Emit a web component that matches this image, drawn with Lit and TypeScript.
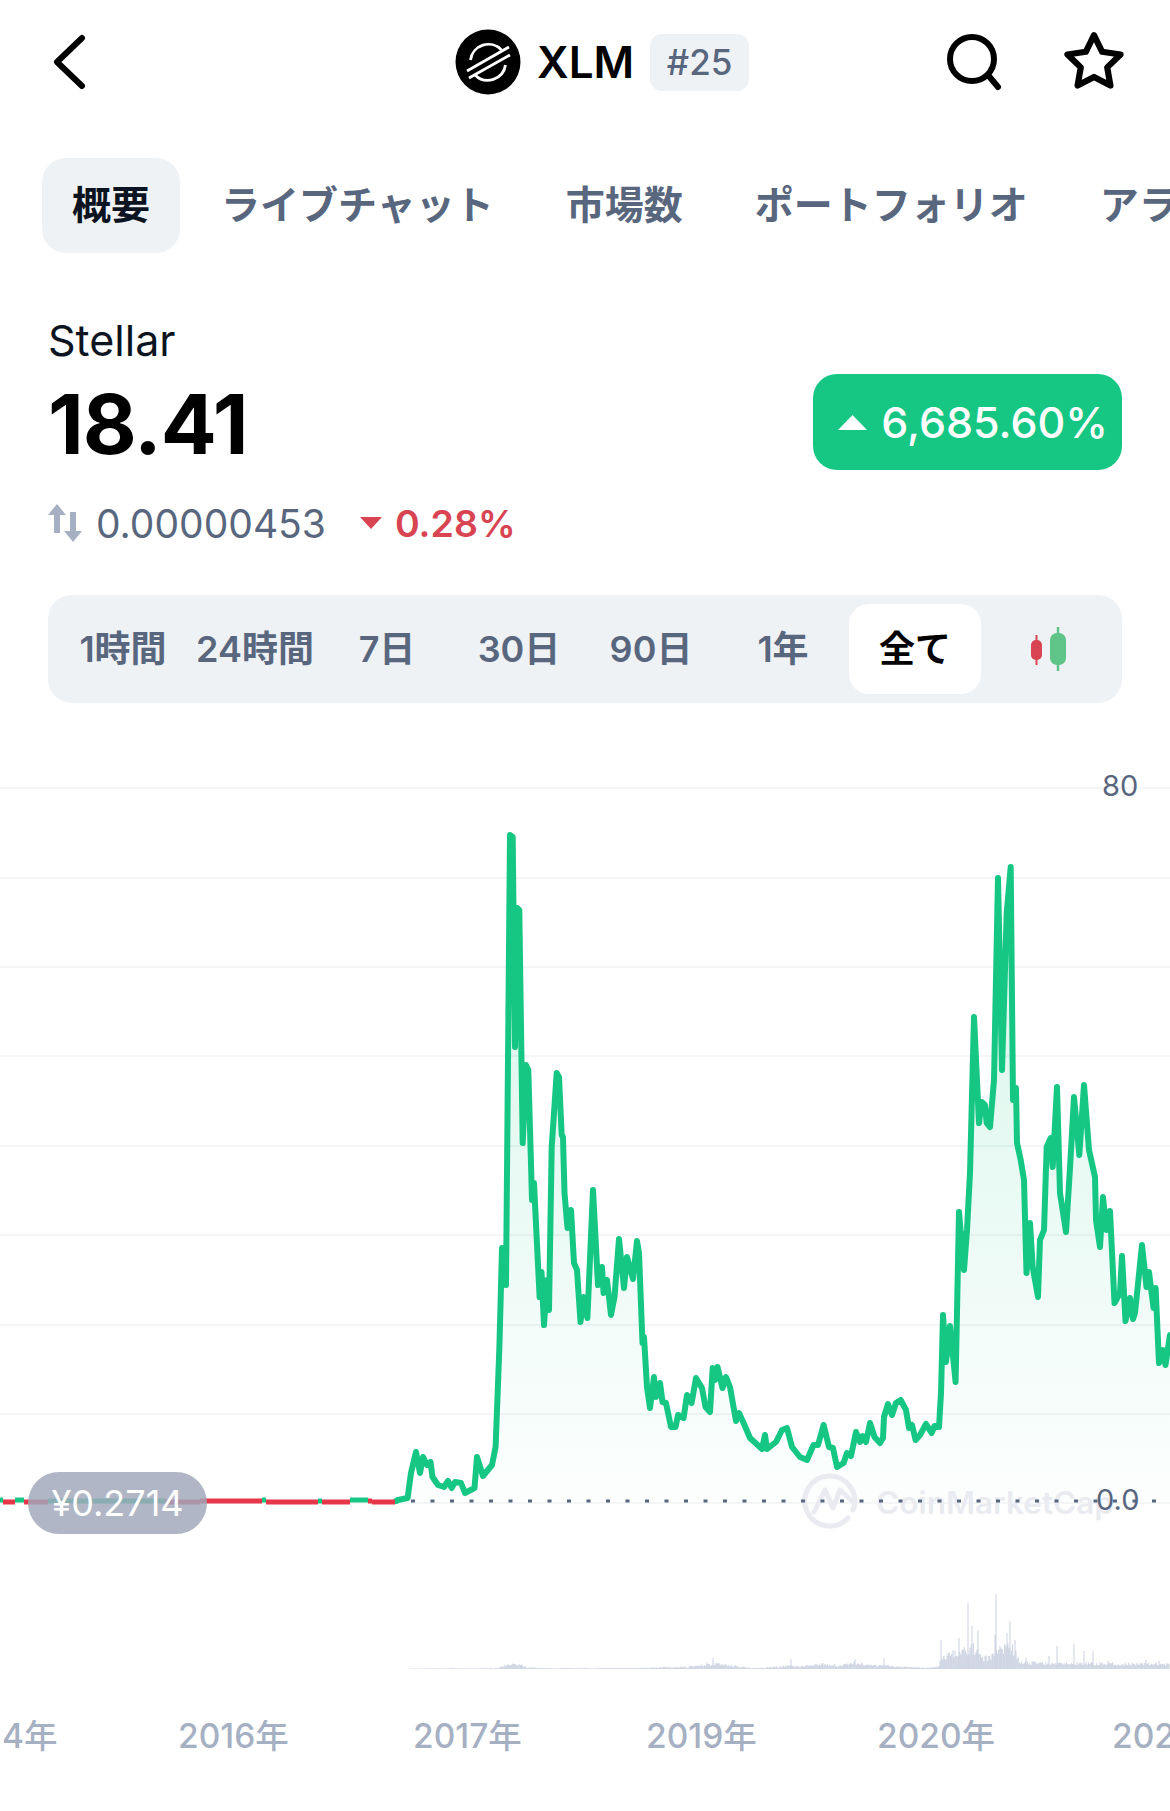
import { css, html, LitElement, svg } from "lit";
import { customElement } from "lit/decorators.js";

// chart geometry is in page pixels, the svg viewBox starts where the chart does
const CHART_TOP = 703;
const CHART_HEIGHT = 1108;
const ZERO_Y = 1501;
const VOLUME_Y = 1669;

const GRID_LINES = [788, 878, 967, 1056, 1146, 1235, 1325, 1414, 1503];

const PRICE: [number, number][] = [
  [396, 1501], [398, 1500], [407.6, 1498], [411, 1473], [416, 1452], [420, 1473], [423, 1457], [427, 1465],
  [430.5, 1462], [432.5, 1477], [438, 1485], [444, 1487], [448, 1481], [451.6, 1488], [455, 1482], [461, 1483],
  [465, 1493], [474.5, 1488], [477, 1457], [483, 1476], [492, 1465], [495.6, 1447], [499.4, 1347], [502, 1248],
  [506, 1285], [510, 835], [512.7, 837], [515, 1047], [517.3, 908], [519.3, 910], [522.7, 1143], [526, 1065],
  [528.3, 1070], [530.7, 1153], [532, 1200], [534, 1183], [539.6, 1297], [541.5, 1272], [544, 1325], [547, 1280],
  [549, 1310], [551.7, 1147], [556.7, 1073], [559, 1077], [561.7, 1135], [563, 1137], [564.5, 1193], [567.5, 1228],
  [571, 1210], [574, 1263], [577, 1270], [580.5, 1322], [583.6, 1297], [587.4, 1318], [593, 1190], [598, 1285],
  [602, 1267], [603.6, 1293], [607, 1280], [611, 1315], [614.5, 1297], [619, 1239], [624, 1288], [627, 1257],
  [633, 1279], [637, 1241], [639, 1253], [642.5, 1343], [644, 1337], [647, 1387], [650, 1408], [654, 1377],
  [656, 1397], [660, 1383], [662.5, 1402], [666, 1403], [671, 1427], [675.6, 1427], [678, 1415], [683.6, 1418],
  [687, 1395], [691.6, 1403], [696, 1378], [702, 1388], [705.5, 1407], [710, 1412], [712.7, 1368], [715, 1380],
  [717.5, 1367], [722.5, 1388], [726, 1377], [730, 1387], [736, 1421], [739, 1413], [743.6, 1423], [750, 1438],
  [762, 1449], [765, 1435], [767, 1449], [776, 1442], [782, 1430], [787, 1428], [792, 1447], [800, 1457],
  [807, 1460], [813.5, 1445], [818, 1445], [823.6, 1425], [829, 1447], [833, 1448], [837, 1467], [843.6, 1463],
  [847, 1453], [851, 1456], [856, 1432], [860, 1442], [862.5, 1436], [866, 1442], [870, 1423], [874.5, 1437],
  [880, 1443], [883, 1438], [884, 1417], [888, 1404], [892, 1415], [896, 1403], [900.7, 1400], [906, 1410],
  [909, 1428], [912, 1425], [915.6, 1440], [920, 1435], [926, 1424], [931.6, 1433], [934.5, 1426], [939, 1427],
  [941, 1393], [943, 1315], [946, 1362], [950, 1326], [955.6, 1382], [959, 1212], [964, 1270], [967, 1230],
  [970, 1173], [974, 1017], [979, 1123], [981.7, 1102], [985, 1105], [986.7, 1123], [990, 1127], [994, 1080],
  [998, 878], [1002, 1070], [1006.7, 913], [1010.7, 867], [1013, 1100], [1016, 1088], [1017, 1143], [1020.7, 1160],
  [1024, 1180], [1026.5, 1273], [1030, 1223], [1032.7, 1267], [1038, 1297], [1040, 1240], [1044, 1230], [1046.7, 1147],
  [1050.7, 1138], [1052.7, 1167], [1057, 1087], [1060, 1193], [1066, 1232], [1070, 1168], [1074, 1097], [1079.3, 1155],
  [1084, 1085], [1089, 1150], [1095, 1177], [1096, 1220], [1100, 1247], [1103, 1197], [1106.5, 1230], [1110, 1211],
  [1114.5, 1303], [1120, 1293], [1122, 1256], [1125.5, 1321], [1130, 1298], [1133, 1319], [1135, 1313], [1142, 1245],
  [1146.5, 1287], [1149, 1272], [1153.5, 1308], [1155.6, 1288], [1159, 1363], [1163, 1350], [1165.5, 1365], [1170, 1335],
];

// flat start of the line, coloured per stretch: from, to, colour, small vertical wobble
const FLAT: [number, number, string, number][] = [
  [0, 3, "g", -1], [3, 15, "r", 1], [15, 24, "g", -1], [24, 48, "r", 1], [48, 165, "g", 0], [165, 200, "r", 1],
  [200, 262, "r", 0], [262, 266, "g", -1], [266, 318, "r", 1], [318, 322, "g", 0], [322, 350, "r", 1],
  [350, 368, "g", -1], [368, 372, "r", 0], [372, 395, "r", 1], [395, 398, "g", 0],
];

const VOLUME_BASE: [number, number][] = [
  [410, 0.6], [495, 1], [500, 2], [509, 7], [520, 6], [527, 2], [550, 1], [640, 1.2], [690, 3], [713, 7], [728, 5],
  [739, 3], [755, 1], [780, 3], [791, 5], [800, 3], [825, 7], [840, 4], [855, 8], [870, 6], [900, 3], [925, 1.5],
  [938, 3], [942, 14], [960, 22], [975, 28], [985, 14], [1000, 22], [1012, 30], [1020, 10], [1030, 8], [1170, 6],
];

const VOLUME_SPIKES: [number, number][] = [
  [941, 29], [944, 13], [949, 13], [953, 19], [959, 31], [968, 66], [972, 43], [978, 38], [985, 13], [995, 34],
  [996, 75], [1000, 23], [1007, 36], [1010, 48], [1015, 29], [1026, 11], [1049, 13], [1057, 23], [1074, 25],
  [1084, 18], [1093, 18], [1108, 8], [1146, 9], [1159, 8], [713, 11], [791, 10], [855, 10], [884, 11],
];

const YEARS: [string, number][] = [
  ["4年", 2], ["2016年", 178], ["2017年", 413], ["2019年", 646], ["2020年", 877], ["2021年", 1112],
];

const TABS = ["概要", "ライブチャット", "市場数", "ポートフォリオ", "アラート"];
const RANGES = ["1時間", "24時間", "7日", "30日", "90日", "1年", "全て"];

function volumeAt(x: number) {
  for (let i = 1; i < VOLUME_BASE.length; i++) {
    const [x0, h0] = VOLUME_BASE[i - 1];
    const [x1, h1] = VOLUME_BASE[i];
    if (x <= x1) return h0 + ((h1 - h0) * (x - x0)) / (x1 - x0);
  }
  return 0;
}

function volumePath() {
  let seed = 17;
  let d = "";
  for (let x = 410; x < 1170; x += 1.15) {
    seed = (seed * 16807) % 2147483647;
    const h = volumeAt(x) * (0.5 + (seed % 100) / 200);
    d += `M${x.toFixed(1)} ${VOLUME_Y}v${(-h).toFixed(1)}`;
  }
  for (const [x, h] of VOLUME_SPIKES) d += `M${x} ${VOLUME_Y}v${-h}`;
  return d;
}

@customElement("app-root")
export class AppRoot extends LitElement {
  static styles = css`
    :host {
      display: block;
      width: 1170px;
      height: 1811px;
      overflow: hidden;
      background: #fff;
      font-family: Inter, "Noto Sans CJK JP", sans-serif;
      color: #0d1421;
    }

    .header {
      display: flex;
      align-items: center;
      height: 124px;
      padding-left: 51px;
    }

    .back {
      width: 36px;
      height: 56px;
    }

    .title {
      display: flex;
      align-items: center;
      margin-left: 368px;
    }

    .logo {
      width: 66px;
      height: 66px;
    }

    .symbol {
      margin-left: 16px;
      font-size: 44px;
      font-weight: 600;
      color: #000;
    }

    .rank {
      margin-left: 16px;
      width: 99px;
      height: 57px;
      line-height: 57px;
      text-align: center;
      border-radius: 12px;
      background: #eff2f5;
      color: #58667e;
      font-size: 35px;
      font-weight: 500;
    }

    .search {
      width: 58px;
      height: 58px;
      margin-left: 196px;
    }

    .star {
      width: 62px;
      height: 64px;
      margin-left: 60px;
    }

    .tabs {
      display: flex;
      align-items: center;
      height: 95px;
      margin-top: 34px;
      padding-left: 42px;
      white-space: nowrap;
    }

    .tab {
      flex-shrink: 0;
      padding: 0 36px;
      line-height: 93px;
      height: 95px;
      font-size: 39px;
      font-weight: 600;
      color: #58667e;
    }

    .tab.active {
      padding: 0 30px;
      margin-right: 5px;
      border-radius: 24px;
      background: #eff2f5;
      color: #0d1421;
      font-weight: 700;
    }

    .info {
      padding: 0 48px;
    }

    .name {
      margin-top: 63px;
      line-height: 48px;
      font-size: 43px;
      color: #0d1421;
    }

    .price-row {
      display: flex;
      align-items: center;
      justify-content: space-between;
      height: 96px;
      margin-top: 10px;
    }

    .price {
      padding-top: 3px;
      font-size: 83px;
      font-weight: 700;
      color: #000;
      letter-spacing: -1px;
    }

    .change {
      display: flex;
      align-items: center;
      gap: 14px;
      height: 96px;
      padding: 0 14px 0 25px;
      border-radius: 24px;
      background: #16c784;
      color: #fff;
      font-size: 43px;
      font-weight: 500;
    }

    .tri-up {
      width: 29px;
      height: 15px;
    }

    .sub-row {
      display: flex;
      align-items: center;
      height: 50px;
      margin-top: 28px;
      color: #58667e;
      font-size: 39px;
    }

    .swap {
      width: 34px;
      height: 38px;
      margin-right: 14px;
    }

    .tri-down {
      width: 22px;
      height: 12px;
      margin-left: 34px;
      margin-right: 13px;
    }

    .pct {
      color: #d94452;
      font-size: 37.500px;
      font-weight: 600;
    }

    .ranges {
      display: grid;
      grid-template-columns: repeat(8, 132px);
      align-items: center;
      height: 108px;
      margin-top: 47px;
      padding: 0 9px;
      box-sizing: border-box;
      border-radius: 24px;
      background: #eff2f5;
    }

    .range {
      height: 90px;
      line-height: 90px;
      text-align: center;
      font-size: 36px;
      font-weight: 600;
      color: #58667e;
      white-space: nowrap;
    }

    .range.active {
      border-radius: 20px;
      background: #fff;
      color: #000;
      font-weight: 700;
    }

    .candles {
      justify-self: center;
      width: 36px;
      height: 44px;
      margin-left: 4px;
    }

    .chart {
      position: relative;
      height: ${CHART_HEIGHT}px;
    }

    .chart svg {
      display: block;
    }

    .spot {
      position: absolute;
      left: 28px;
      top: ${1472 - CHART_TOP}px;
      width: 179px;
      height: 62px;
      line-height: 62px;
      border-radius: 31px;
      text-align: center;
      background: rgba(161, 168, 186, 0.84);
      color: #fff;
      font-size: 36px;
    }

    .axis {
      fill: #58667e;
      font-size: 29px;
    }

    .year {
      fill: #a6b0c3;
      font-size: 33.5px;
      font-weight: 500;
    }

    .mark {
      fill: #e9ebf1;
      font-size: 31.500px;
      font-weight: 600;
    }
  `;

  private renderChart() {
    const line = PRICE.map(([x, y]) => `${x},${y}`).join(" ");
    return html`
      <svg width="1170" height=${CHART_HEIGHT} viewBox="0 ${CHART_TOP} 1170 ${CHART_HEIGHT}">
        <defs>
          <linearGradient id="area" gradientUnits="userSpaceOnUse" x1="0" y1="1050" x2="0" y2="1503">
            <stop offset="0" stop-color="#16c784" stop-opacity="0.13"></stop>
            <stop offset="1" stop-color="#16c784" stop-opacity="0.01"></stop>
          </linearGradient>
        </defs>
        ${GRID_LINES.map((y) => svg`<line x1="0" x2="1170" y1=${y} y2=${y} stroke="#eff2f5" stroke-width="1.5"></line>`)}
        <polygon points="396,${ZERO_Y} ${line} 1170,${ZERO_Y}" fill="url(#area)"></polygon>

        <g fill="none" stroke="#e9ebf1" stroke-width="5" stroke-linecap="round" stroke-linejoin="round">
          <path d="M853 1510A25 25 0 1 0 848 1518"></path>
          <path d="M814 1512L825 1490 833 1508 840 1490 852 1501"></path>
        </g>
        <text class="mark" x="876" y="1514">CoinMarketCap</text>

        <line x1="411" x2="1170" y1=${ZERO_Y} y2=${ZERO_Y} stroke="#58667e" stroke-width="3" stroke-dasharray="4 15.500"></line>

        <path d=${volumePath()} fill="none" stroke="#d0d6e4" stroke-width="1.100"></path>

        <polyline points=${line} fill="none" stroke="#16c784" stroke-width="6" stroke-linejoin="round" stroke-linecap="round"></polyline>
        ${FLAT.map(
          ([a, b, c, w]) => svg`<line x1=${a} x2=${b} y1=${ZERO_Y + w} y2=${ZERO_Y + w} stroke=${c === "r" ? "#e5364a" : "#16c784"} stroke-width="5"></line>`,
        )}

        <text class="axis" x="1102" y="796">80</text>
        <text class="axis" x="1096" y="1510">0.0</text>
        ${YEARS.map(([label, x]) => svg`<text class="year" x=${x} y="1748">${label}</text>`)}
      </svg>
      <div class="spot">¥0.2714</div>
    `;
  }

  render() {
    return html`
      <div class="header">
        <svg class="back" viewBox="0 0 36 56" fill="none" stroke="#000" stroke-width="6" stroke-linecap="round" stroke-linejoin="round">
          <path d="M31 4 6 28l25 24"></path>
        </svg>
        <div class="title">
          <svg class="logo" viewBox="0 0 66 66" fill="none">
            <circle cx="33" cy="33" r="32.500" fill="#000"></circle>
            <g stroke="#fff" stroke-width="2.800">
              <path d="M12 42 54 18M14 49 55 26"></path>
              <path d="M15.500 31A18 18 0 0 1 46.500 21"></path>
              <path d="M50.500 36A18 18 0 0 1 20 46"></path>
            </g>
          </svg>
          <span class="symbol">XLM</span>
          <span class="rank">#25</span>
        </div>
        <svg class="search" viewBox="0 0 58 58" fill="none" stroke="#000" stroke-width="6" stroke-linecap="round">
          <circle cx="27" cy="26" r="22"></circle>
          <path d="M43 42 53 54"></path>
        </svg>
        <svg class="star" viewBox="0 0 60 62" fill="none" stroke="#000" stroke-width="6" stroke-linejoin="round">
          <path d="M30 5 37.900 21.100 55.700 23.700 42.800 36.200 45.900 53.800 30 45.500 14.100 53.800 17.200 36.200 4.300 23.700 22.100 21.100Z"></path>
        </svg>
      </div>

      <div class="tabs">
        ${TABS.map((t, i) => html`<div class="tab ${i === 0 ? "active" : ""}">${t}</div>`)}
      </div>

      <div class="info">
        <div class="name">Stellar</div>
        <div class="price-row">
          <div class="price">18.41</div>
          <div class="change">
            <svg class="tri-up" viewBox="0 0 29 15"><path d="M14.500 0 29 15H0Z" fill="#fff"></path></svg>
            <span>6,685.60%</span>
          </div>
        </div>
        <div class="sub-row">
          <svg class="swap" viewBox="0 0 34 38">
            <path d="M9 0 18 11H12V29H6V11H0Z" fill="#a6b0c3"></path>
            <path d="M25 38 34 27H28V8H22V27H16Z" fill="#a6b0c3"></path>
          </svg>
          <span>0.00000453</span>
          <svg class="tri-down" viewBox="0 0 22 12"><path d="M0 0H22L11 12Z" fill="#d94452"></path></svg>
          <span class="pct">0.28%</span>
        </div>
        <div class="ranges">
          ${RANGES.map((r, i) => html`<div class="range ${i === 6 ? "active" : ""}">${r}</div>`)}
          <svg class="candles" viewBox="0 0 36 44">
            <path d="M5.500 8V38" stroke="#d94452" stroke-width="2"></path>
            <rect x="0" y="13" width="11" height="20" rx="5" fill="#d94452"></rect>
            <path d="M27 0V44" stroke="#5ec488" stroke-width="2.500"></path>
            <rect x="19" y="6" width="16" height="32" rx="7" fill="#5ec488"></rect>
          </svg>
        </div>
      </div>

      <div class="chart">${this.renderChart()}</div>
    `;
  }
}

declare global {
  interface HTMLElementTagNameMap {
    "app-root": AppRoot;
  }
}
